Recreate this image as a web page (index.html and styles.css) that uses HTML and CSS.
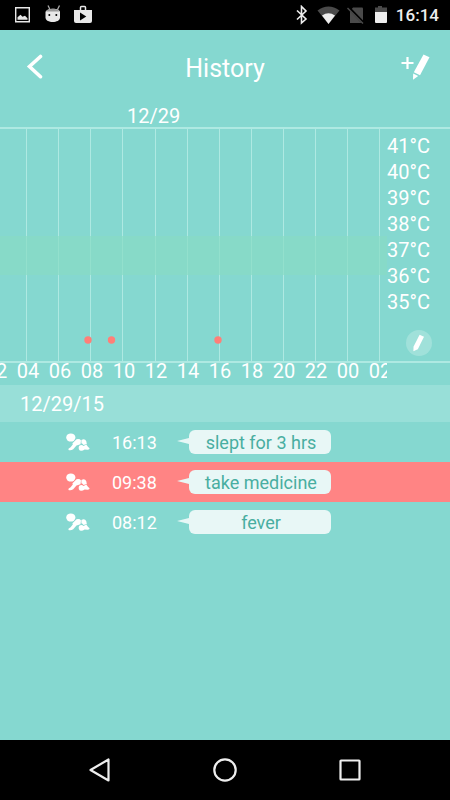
FILE: index.html
```html
<!DOCTYPE html>
<html lang="en">
<head>
<meta charset="utf-8">
<meta name="viewport" content="width=device-width, initial-scale=1">
<title>History</title>
<link rel="stylesheet" href="styles.css">
</head>
<body>
<svg class="defs" aria-hidden="true">
  <symbol id="baby" viewBox="0 0 24 18">
    <ellipse cx="4.800" cy="4.500" rx="4.600" ry="4.100"/>
    <path d="M7 9.800 10.500 6.200Q14 5.600 15 7.500L14.500 11.300 10.500 12.600 7.200 16.300Q5 17.700 2.400 17 1.800 15.500 4.600 14.300L6.800 11.600Q6 10.500 7 9.800Z"/>
    <path d="M15.400 6.900Q19 5.200 20.300 8.300L20.800 11 17.600 12Q16.500 10.300 15.400 10.300Z"/>
    <path d="M13.200 12.800Q15.800 11.300 17.500 13.100L20.300 11.500Q21.800 14 23.600 15.200 23.700 17 21.500 16.800L18.600 16.400Q16.500 18.100 13.800 17.500 11.900 15.500 13.200 12.800Z"/>
  </symbol>
</svg>
<div class="screen">
  <div class="status">
    <svg class="status-left" width="80" height="20" viewBox="0 0 80 20">
      <path d="M.7 2.700h13.600v14.100H.7z" fill="none" stroke="#e8e8e8" stroke-width="1.400"/>
      <path d="M2.500 14.800v-2.500l3-2.500 2 2 2.500-1 2.500 2.500v1.500z" fill="#e8e8e8"/>
      <path d="M33 .5l2 4M44.500 .5l-2 4" stroke="#aaa" stroke-width="1.300"/>
      <path d="M30.500 7C31.500 2.500 45 2.500 45 7L45 12.500C45 18.500 30.500 18.500 30.500 12.500Z" fill="#e8e8e8"/>
      <path d="M31 6.500C33 2.800 43 2.800 44.600 6.500Z" fill="#999"/>
      <circle cx="34.300" cy="10" r="1"/><circle cx="41.300" cy="10" r="1"/>
      <path d="M65.500 5V2.500q0-1 1-1h3q1 0 1 1V5" fill="none" stroke="#e8e8e8" stroke-width="1.500"/>
      <path d="M59 5h18v11q0 2-2 2H61q-2 0-2-2z" fill="#e8e8e8"/>
      <path d="M65 7.500v8l6.300-4z"/>
    </svg>
    <div class="status-right">
      <svg width="92" height="20" viewBox="0 0 92 20">
        <path d="M1 5.500l9 8.500-4.500 4V1.500L10 6l-9 8.500" fill="none" stroke="#eee" stroke-width="1.600"/>
        <path d="M21.500 5.500Q32.500-2.500 43.500 5.500L32.500 19Z" fill="#4a4a4a"/>
        <path d="M26 10.500Q32.500 6 39 10.500L32.500 19Z" fill="#eee"/>
        <path d="M57 2.500h9q1 0 1 1V18H54V6z" fill="#4a4a4a"/>
        <path d="M52.500 2.500l15.500 16" stroke="#000" stroke-width="3"/>
        <path d="M51.500 3l15.500 15.500" stroke="#4a4a4a" stroke-width="1.500"/>
        <path d="M79 2.500h3V1h4v1.500h5V8H79z" fill="#4a4a4a"/>
        <path d="M79 7h12v10q0 1-1 1H80q-1 0-1-1z" fill="#eee"/>
      </svg>
      <span>16:14</span>
    </div>
  </div>

  <header class="header">
    <button class="icon-button" type="button" aria-label="Back">
      <svg width="18" height="26" viewBox="0 0 18 26"><path d="M14.500 2.500 3.500 12.500l11 10.200" fill="none" stroke="#fff" stroke-width="3.600" stroke-linecap="round"/></svg>
    </button>
    <h1>History</h1>
    <button class="icon-button" type="button" aria-label="Add entry">
      <svg width="30" height="26" viewBox="0 0 30 26" fill="#fff">
        <path d="M1.500 9h12M7.500 3v12" stroke="#fff" stroke-width="2.200"/>
        <path d="M23.500 .5l6 2.800-9.500 18-6.200-3.100z"/>
        <path d="M13.200 19.500l5 2.600-5.200 3.700z"/>
      </svg>
    </button>
  </header>

  <section class="chart">
    <div class="chart-date">12/29</div>
    <div class="chart-body">
      <svg class="plot" viewBox="0 0 387 232">
        <path d="M26.500 0v232M58.500 0v232M90.500 0v232M122.500 0v232M155.500 0v232M187.500 0v232M219.500 0v232M251.500 0v232M283.500 0v232M315.500 0v232M347.500 0v232M379.500 0v232" stroke="#aee9e2"/>
        <path d="M0 107h387v39H0z" fill="#87dbc4" fill-opacity=".7"/>
        <g fill="#ff7f78"><circle cx="88" cy="211" r="3.700"/><circle cx="111.500" cy="211" r="3.700"/><circle cx="218" cy="211" r="3.700"/></g>
      </svg>
      <div class="side">
        <ol class="temps"><li>41°C</li><li>40°C</li><li>39°C</li><li>38°C</li><li>37°C</li><li>36°C</li><li>35°C</li></ol>
        <button class="edit" type="button" aria-label="Edit">
          <svg width="13" height="18" viewBox="0 0 13 18" fill="#fff"><path d="M7.600 .8l4.400 2-6.200 12.500L1.400 17.300l.1-4.600z"/></svg>
        </button>
      </div>
    </div>
    <div class="hours"><span>02</span><span>04</span><span>06</span><span>08</span><span>10</span><span>12</span><span>14</span><span>16</span><span>18</span><span>20</span><span>22</span><span>00</span><span>02</span></div>
  </section>

  <h2 class="day">12/29/15</h2>
  <ul class="entries">
    <li><svg class="baby"><use href="#baby"/></svg><time>16:13</time><span class="bubble">slept for 3 hrs</span></li>
    <li class="selected"><svg class="baby"><use href="#baby"/></svg><time>09:38</time><span class="bubble">take medicine</span></li>
    <li><svg class="baby"><use href="#baby"/></svg><time>08:12</time><span class="bubble">fever</span></li>
  </ul>

  <nav class="nav">
    <button type="button" aria-label="Back"><svg width="26" height="26" viewBox="0 0 26 26"><path d="M21.500 2.500v21L3.500 13z"/></svg></button>
    <button type="button" aria-label="Home"><svg width="26" height="26" viewBox="0 0 26 26"><circle cx="13" cy="13" r="10.700"/></svg></button>
    <button type="button" aria-label="Recent apps"><svg width="26" height="26" viewBox="0 0 26 26"><rect x="3.500" y="3.500" width="19" height="19" rx=".5"/></svg></button>
  </nav>
</div>
</body>
</html>
```
FILE: styles.css
```css
* { box-sizing: border-box; margin: 0; padding: 0; }
body { font-family: Roboto, "Liberation Sans", sans-serif; font-size: 20px; color: #fff; background: #85d8d0; }
button { background: none; border: 0; color: inherit; cursor: pointer; }
svg { display: block; }
ol, ul { list-style: none; }
.defs { position: absolute; width: 0; height: 0; }
.screen { min-height: 100vh; display: flex; flex-direction: column; }

.status { height: 30px; background: #000; display: flex; justify-content: space-between; align-items: center; padding: 0 11px 0 15px; }
.status-right { display: flex; align-items: center; gap: 8px; font-size: 17px; font-weight: 500; color: #eee; line-height: 30px; }

.header { height: 74px; display: flex; justify-content: space-between; align-items: center; padding: 0 20px 0 26px; }
.header h1 { font-size: 25px; font-weight: 400; line-height: 30px; padding: 4px 6px 0 0; }
.icon-button { width: 30px; height: 30px; }

.chart-date { padding: 2px 0 0 127px; line-height: 21px; border-bottom: 2px solid #aee9e2; }
.chart-body { display: flex; border-bottom: 2px solid #aee9e2; }
.plot { flex: 1; min-width: 0; }
.side { width: 63px; display: flex; flex-direction: column; justify-content: space-between; padding: 4px 0 5px; }
.temps li { line-height: 26px; }
.edit { width: 26px; height: 26px; border-radius: 50%; background: #a0e1da; display: grid; place-items: center; align-self: center; }
.hours { display: flex; margin: -4px 63px 0 0; overflow-x: clip; line-height: 24px; height: 26px; }
.hours span { flex: 0 0 32px; text-align: center; }
.hours span:first-child { margin-left: -20px; }

.day { background: #98dfd8; font-size: 20px; font-weight: 400; line-height: 36px; padding: 1px 20px 0; }
.entries li { height: 40px; display: flex; align-items: center; padding-left: 66px; font-size: 18px; }
.entries .selected { background: #ff8484; }
.baby { width: 24px; height: 18px; fill: #fff; }
.entries time { width: 77px; margin-left: 22px; }
.bubble { position: relative; width: 142px; height: 24px; line-height: 26px; padding-left: 2px; border-radius: 6px; background: #e8f7f6; color: #48aea1; text-align: center; }
.bubble::before { content: ""; position: absolute; left: -12px; top: 8px; border: solid transparent; border-width: 3px 12px 3px 0; border-right-color: #e8f7f6; }

.nav { height: 60px; margin-top: auto; background: #000; display: flex; justify-content: center; align-items: center; gap: 99px; }
.nav svg { fill: none; stroke: #eee; stroke-width: 2.200; stroke-linejoin: round; }
```
